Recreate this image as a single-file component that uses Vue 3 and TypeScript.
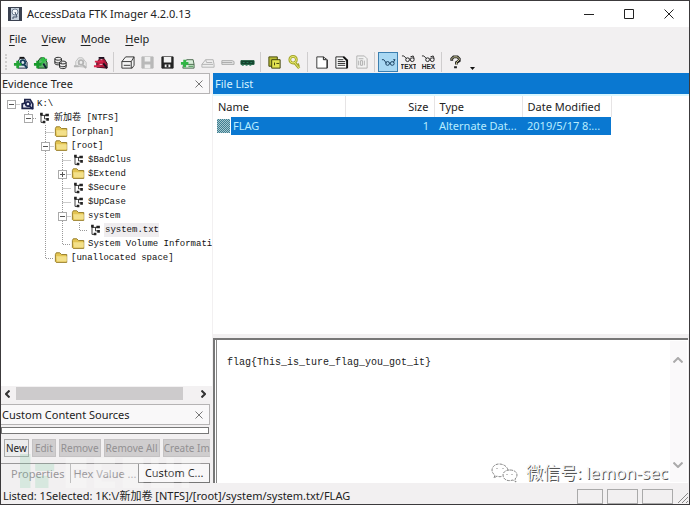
<script setup lang="ts">
import { ref } from 'vue'

interface Shape { d: string; fill?: string; stroke?: string; w?: number }

const casePath = 'M2 13V8l3-1V3h6l3 5v5z'
const icons: Record<string, Shape[]> = {
  addItem: [
    { d: 'M5 14V7l3-4h4l3 5v6z', fill: '#dfe8ee', stroke: '#1c2440', w: 1 },
    { d: 'M8 8a2.5 2.5 0 1 0 5 0a2.5 2.5 0 1 0-5 0M12 10l3 4', stroke: '#17405a', w: 2 },
    { d: 'M7 3h5', stroke: '#111', w: 2 },
    { d: 'M1 10h8M5 6v8', stroke: '#23a336', w: 3 },
  ],
  addAll: [
    { d: 'M5 14V7l3-4h4l3 5v6z', fill: '#5fb76c', stroke: '#14401c', w: 1 },
    { d: 'M8 10l4-4M11 2v6M8 5h7', stroke: '#2fc045', w: 2 },
    { d: 'M1 10h8M5 6v8', stroke: '#179a2b', w: 3 },
    { d: 'M11 9l3 5', stroke: '#123', w: 2 },
  ],
  mount: [
    { d: 'M2 4c0-2 7-2 7 0v5c0 2-7 2-7 0zM2 4c0 2 7 2 7 0M2 7c0 2 7 2 7 0', fill: '#eee', stroke: '#222', w: 1 },
    { d: 'M7 8c0-2 7-2 7 0v5c0 2-7 2-7 0zM7 8c0 2 7 2 7 0M7 11c0 2 7 2 7 0', fill: '#eee', stroke: '#222', w: 1 },
  ],
  removeItem: [
    { d: 'M3 12V7l3-4h4l4 5v5z', fill: '#eee', stroke: '#bbb', w: 1 },
    { d: 'M6 8a2.5 2.5 0 1 0 5 0a2.5 2.5 0 1 0-5 0M10 10l4 4M1 12h5', stroke: '#b5b5b5', w: 2 },
  ],
  removeAll: [
    { d: 'M4 13V8l3-4h5l3 5v5z', fill: '#b5183c', stroke: '#3d0c1c', w: 1 },
    { d: 'M6 3h6M11 9l4 5', stroke: '#1c1020', w: 2 },
    { d: 'M1 12h7M2 7h9', stroke: '#d8244b', w: 2 },
    { d: 'M7 10h3M8 5h2', stroke: '#f0c9d2', w: 1 },
  ],
  image: [
    { d: 'M2 7l4-5h9v9l-2 3H2zM2 7h10l3-5M12 7v7', fill: '#f4f4f4', stroke: '#333', w: 1 },
    { d: 'M4 11h7', stroke: '#333', w: 1 },
  ],
  saveOff: [
    { d: 'M2 2h12v12H2z', fill: '#b9b9b9', stroke: '#b9b9b9', w: 1 },
    { d: 'M5 2h6v5H5zM5 10h6v4H5z', fill: '#efefef' },
  ],
  save: [
    { d: 'M2 2h12v12H2z', fill: '#222', stroke: '#222', w: 1 },
    { d: 'M4 2h8v6H4zM5 10h6v3H5z', fill: '#f2f2f2' },
    { d: 'M7 10h2v3H7z', fill: '#222' },
  ],
  imageAdd: [
    { d: 'M4 9l3-4h7l1 5v4H3zM4 10h11', fill: '#d8ecd9', stroke: '#47674b', w: 1 },
    { d: 'M1 9h8M5 5v8', stroke: '#31b545', w: 3 },
    { d: 'M9 12h5', stroke: '#2f8a3c', w: 1 },
  ],
  driveOff: [{ d: 'M2 10l4-5h8l1 5v3H2zM2 10h12M6 5l1 3h6', fill: '#eee', stroke: '#b2b2b2', w: 1 }],
  capsule: [{ d: 'M2 6h11l2 1v3H2zM2 8h11', fill: '#e5e5e5', stroke: '#aaa', w: 1 }],
  ram: [
    { d: 'M1 6h14v4H1z', fill: '#143f2c', stroke: '#1a5b3b', w: 1 },
    { d: 'M2 11h2M6 11h2M10 11h2M3 8h2M7 8h2M11 8h2', stroke: '#26805a', w: 1 },
  ],
  files: [
    { d: 'M2 2h9v10H2z', fill: '#b9bc35', stroke: '#44470c', w: 1 },
    { d: 'M5 5h9v9H5z', fill: '#e4e552', stroke: '#3a3d0a', w: 1 },
    { d: 'M10 9h3M8 8v3', stroke: '#3a3d0a', w: 1 },
  ],
  key: [
    { d: 'M3 5a3 3 0 1 0 7 0a3 3 0 1 0-7 0M8 8l5 6M11 11l2-1', stroke: '#a3a52a', w: 3 },
    { d: 'M3 5a3 3 0 1 0 7 0a3 3 0 1 0-7 0M8 8l5 6', stroke: '#eef077', w: 1 },
  ],
  page: [
    { d: 'M3 2h7l4 3v9H3z', fill: '#fff', stroke: '#333', w: 1 },
    { d: 'M10 2v3h3M14 5v9', stroke: '#111', w: 1 },
  ],
  pageText: [
    { d: 'M2 2h9l3 3v9H2z', fill: '#fff', stroke: '#222', w: 1 },
    { d: 'M4 5h6M4 7h8M4 9h8M4 11h8', stroke: '#222', w: 1 },
    { d: 'M14 5v9M10 2l4 4', stroke: '#111', w: 2 },
  ],
  pageHex: [
    { d: 'M3 1h8l3 3v10H3z', fill: '#f2f2f2', stroke: '#b0b0b0', w: 1 },
    { d: 'M5 6v5M7 6h2v5H7zM11 6v5M5 4h5', stroke: '#adadad', w: 1 },
  ],
  glasses: [{ d: 'M1 5h2l3 4M5 9a2 2 0 1 0 4 0a2 2 0 1 0-4 0M10 9a2 2 0 1 0 4 0a2 2 0 1 0-4 0M9 9h1M13 8l2-3h-2', stroke: '#153c5c', w: 1 }],
  glassesTag: [{ d: 'M1 1h2l3 3M5 5a2 2 0 1 0 4 0a2 2 0 1 0-4 0M10 5a2 2 0 1 0 4 0a2 2 0 1 0-4 0M9 4h1M10 2l3-1 1 3', stroke: '#222', w: 1 }],
  help: [
    { d: 'M4 6V4l2-2h4l2 2v2L9 8v2M8 12v2', stroke: '#222', w: 3 },
    { d: 'M4 5V4l2-2h4l2 2v1L9 8v2', stroke: '#dcd9a0', w: 1 },
  ],
  disk: [
    { d: casePath, fill: '#e9ebf5', stroke: '#20264a', w: 2 },
    { d: 'M6 8a2.5 2.5 0 1 0 5 0a2.5 2.5 0 1 0-5 0M10 10l4 4', stroke: '#1c2350', w: 2 },
  ],
  volume: [
    { d: 'M4 3v10h4M4 5h6M8 5v4h4', stroke: '#222', w: 1 },
    { d: 'M3 2h3v3H3zM9 3h4v3H9zM10 8h3v3h-3zM6 11h3v3H6z', fill: '#222' },
  ],
  folder: [
    { d: 'M1 4l1-2h4l2 2h6v9H2l-1-1z', fill: '#e3c452', stroke: '#8f7520', w: 1 },
    { d: 'M2 6h12v6H3z', fill: '#f3e08a' },
  ],
}

interface Tool { icon: string; title: string; off?: boolean; active?: boolean; tag?: string }
const toolGroups: Tool[][] = [
  [
    { icon: 'addItem', title: 'Add Evidence Item' },
    { icon: 'addAll', title: 'Add All Attached Devices' },
    { icon: 'mount', title: 'Image Mounting' },
    { icon: 'removeItem', title: 'Remove Evidence Item', off: true },
    { icon: 'removeAll', title: 'Remove All Evidence Items' },
  ],
  [
    { icon: 'image', title: 'Create Disk Image' },
    { icon: 'saveOff', title: 'Export Disk Image', off: true },
    { icon: 'save', title: 'Export Logical Image' },
    { icon: 'imageAdd', title: 'Add to Custom Content Image' },
    { icon: 'driveOff', title: 'Create Custom Content Image', off: true },
    { icon: 'capsule', title: 'Verify Image', off: true },
    { icon: 'ram', title: 'Capture Memory' },
  ],
  [
    { icon: 'files', title: 'Obtain Protected Files' },
    { icon: 'key', title: 'Detect EFS Encryption' },
  ],
  [
    { icon: 'page', title: 'Export Files' },
    { icon: 'pageText', title: 'Export Directory Listing' },
    { icon: 'pageHex', title: 'Export File Hash List', off: true },
  ],
  [
    { icon: 'glasses', title: 'Automatic preview', active: true },
    { icon: 'glassesTag', title: 'Text preview', tag: 'TEXT' },
    { icon: 'glassesTag', title: 'Hex preview', tag: 'HEX' },
  ],
  [{ icon: 'help', title: 'Help Topics' }],
]

// Guide cells: R = root, space = empty, | = line through, + = tee, L = last branch.
// The box drawn over the last cell shows whether the node is open.
interface TreeNode { guides: string; box?: 'open' | 'closed'; icon: string; label: string; current?: boolean }
const nodes: TreeNode[] = [
  { guides: 'R', box: 'open', icon: 'disk', label: 'K:\\' },
  { guides: ' L', box: 'open', icon: 'volume', label: '新加卷 [NTFS]' },
  { guides: '  +', icon: 'folder', label: '[orphan]' },
  { guides: '  +', box: 'open', icon: 'folder', label: '[root]' },
  { guides: '  |+', icon: 'volume', label: '$BadClus' },
  { guides: '  |+', box: 'closed', icon: 'folder', label: '$Extend' },
  { guides: '  |+', icon: 'volume', label: '$Secure' },
  { guides: '  |+', icon: 'volume', label: '$UpCase' },
  { guides: '  |+', box: 'open', icon: 'folder', label: 'system' },
  { guides: '  ||L', icon: 'volume', label: 'system.txt', current: true },
  { guides: '  |L', icon: 'folder', label: 'System Volume Informati' },
  { guides: '  L', icon: 'folder', label: '[unallocated space]' },
]

const guidePath: Record<string, string> = {
  R: 'M8.5 7.5H17', ' ': '', '|': 'M8.5 0V14', '+': 'M8.5 0V14M8.5 7.5H17', L: 'M8.5 0V7.5H17',
}

const menus = ['File', 'View', 'Mode', 'Help']
const actions = ['New', 'Edit', 'Remove', 'Remove All', 'Create Im']
const tabs = ['Properties', 'Hex Value ...', 'Custom C...']
const activeTab = ref('Custom C...')
const preview = ref('flag{This_is_ture_flag_you_got_it}')
</script>

<template>
  <div class="window">
    <header class="titlebar">
      <svg class="appicon" viewBox="0 0 14 14">
        <rect width="14" height="14" fill="#3a4150" />
        <path d="M3 1h8v12H3z" fill="#c9d3de" />
        <circle cx="7" cy="5" r="3" fill="#f4f7fa" stroke="#6c7c90" />
        <path d="M7 5l2 5H5v2" fill="none" stroke="#46546a" />
      </svg>
      <h1>AccessData FTK Imager 4.2.0.13</h1>
      <button class="caption" aria-label="Minimize"><svg viewBox="0 0 10 10"><path d="M0 5.5h10" /></svg></button>
      <button class="caption" aria-label="Maximize"><svg viewBox="0 0 10 10"><path d="M.5.5h9v9h-9z" /></svg></button>
      <button class="caption" aria-label="Close"><svg viewBox="0 0 10 10"><path d="M.5.5l9 9M9.5.5l-9 9" /></svg></button>
    </header>

    <nav class="menubar">
      <button v-for="m in menus" :key="m"><u>{{ m[0] }}</u>{{ m.slice(1) }}</button>
    </nav>

    <div class="toolbar" role="toolbar">
      <span class="grip"></span>
      <div v-for="(group, g) in toolGroups" :key="g" class="group">
        <button v-for="t in group" :key="t.title" class="tool" :class="{ active: t.active }" :disabled="t.off" :aria-label="t.title">
          <svg viewBox="0 0 16 16">
            <path v-for="(s, i) in icons[t.icon]" :key="i" :d="s.d" :fill="s.fill ?? 'none'" :stroke="s.stroke ?? 'none'" :stroke-width="s.w ?? 0" />
            <text v-if="t.tag" x="8" y="15" text-anchor="middle">{{ t.tag }}</text>
          </svg>
        </button>
      </div>
      <button class="more" aria-label="Toolbar options"><svg viewBox="0 0 5 3"><path d="M0 0h5L2.5 3z" /></svg></button>
    </div>

    <main>
      <aside>
        <div class="panehead">
          <h2>Evidence Tree</h2>
          <button aria-label="Close Evidence Tree"><svg viewBox="0 0 8 8"><path d="M.5.5l7 7M7.5.5l-7 7" /></svg></button>
        </div>
        <ul class="tree" role="tree">
          <li v-for="n in nodes" :key="n.label" role="treeitem">
            <svg v-for="(c, i) in n.guides.split('')" :key="i" class="guide" viewBox="0 0 17 14">
              <path class="dots" :d="guidePath[c]" />
              <g v-if="n.box && i === n.guides.length - 1">
                <rect x="4.5" y="3.5" width="8" height="8" />
                <path class="sign" :d="n.box === 'open' ? 'M6 7.5h5' : 'M6 7.5h5M8.5 5v5'" />
              </g>
            </svg>
            <svg class="nodeicon" viewBox="0 0 16 16">
              <path v-for="(s, i) in icons[n.icon]" :key="i" :d="s.d" :fill="s.fill ?? 'none'" :stroke="s.stroke ?? 'none'" :stroke-width="s.w ?? 0" />
            </svg>
            <span :class="{ current: n.current }">{{ n.label }}</span>
          </li>
        </ul>
        <div class="hscroll">
          <button aria-label="Scroll left"><svg viewBox="0 0 5 8"><path d="M4.5 .5L1 4l3.5 3.5" /></svg></button>
          <span class="thumb"></span>
          <button aria-label="Scroll right"><svg viewBox="0 0 5 8"><path d="M.5 .5L4 4L.5 7.5" /></svg></button>
        </div>

        <div class="panehead second">
          <h2>Custom Content Sources</h2>
          <button aria-label="Close Custom Content Sources"><svg viewBox="0 0 8 8"><path d="M.5.5l7 7M7.5.5l-7 7" /></svg></button>
        </div>
        <div class="sources"></div>
        <div class="actions">
          <button v-for="(a, i) in actions" :key="a" :disabled="i > 0">{{ a }}</button>
        </div>
        <div class="tabs" role="tablist">
          <button v-for="t in tabs" :key="t" role="tab" :aria-selected="activeTab === t" :class="{ selected: activeTab === t }" @click="activeTab = t">{{ t }}</button>
        </div>
        <svg class="stamp" viewBox="0 0 200 36" aria-hidden="true">
          <path d="M0 0h11v36H0zM16 10h20v8H16zM16 23h14v13H16z" fill="#6fc79a" opacity=".2" />
          <path d="M48 4h22v12H56v6h14v14H48zM78 4h22v7H86v6h12v6H86v6h14v7H78zM108 4h22v32h-22zM138 4h8v24h8V4h8v32h-24zM170 4h20v8h-12v6h10v6h-10v12h-8z" fill="#fff" opacity=".25" />
        </svg>
      </aside>

      <section class="content">
        <h2 class="bluehead">File List</h2>
        <div class="list">
          <table>
            <colgroup><col class="c-name" /><col class="c-size" /><col class="c-type" /><col class="c-date" /></colgroup>
            <thead>
              <tr><th>Name</th><th class="num">Size</th><th>Type</th><th>Date Modified</th></tr>
            </thead>
            <tbody>
              <tr>
                <td class="name"><div><span class="fileicon"></span><span class="filename">FLAG</span></div></td>
                <td class="num">1</td><td>Alternate Dat...</td><td>2019/5/17 8:...</td>
              </tr>
            </tbody>
          </table>
        </div>
        <div class="viewer">
          <textarea v-model="preview" readonly aria-label="File content" spellcheck="false"></textarea>
          <div class="vscroll">
            <button aria-label="Scroll up"><svg viewBox="0 0 10 6"><path d="M.5 5.5L5 1l4.5 4.5" /></svg></button>
            <button aria-label="Scroll down"><svg viewBox="0 0 10 6"><path d="M.5 .5L5 5L9.5 .5" /></svg></button>
          </div>
          <div class="account">
            <svg viewBox="0 0 28 20">
              <path d="M17 7C16 3 12 1 8 1C4 1 1 4 1 7c0 2 1 4 3 5l-1 3 3-2c2 1 4 1 5 0" />
              <path d="M19 7c4 0 7 2 7 5 0 2-1 3-2 4l1 3-3-2c-6 2-10-1-10-5 0-3 3-5 7-5z" />
              <path d="M6 5v1M12 5v1M16 11v1M21 11v1" />
            </svg>
            <span>微信号: lemon-sec</span>
          </div>
        </div>
      </section>
    </main>

    <footer>
      <p>Listed: 1Selected: 1K:\/新加卷 [NTFS]/[root]/system/system.txt/FLAG</p>
      <span class="cell small"></span><span class="cell"></span><span class="cell"></span>
      <svg class="resize" viewBox="0 0 12 14"><path d="M1 13L11 3M5 13l6-6M9 13l2-2" /></svg>
    </footer>
  </div>
</template>

<style>
body { margin: 0; }
</style>

<style scoped>
* { box-sizing: border-box; }
.window {
  display: flex; flex-direction: column; min-height: 100vh;
  border: 1px solid #3c3a3c; background: #f2f0f1; color: #222;
  font: 11px/16px "Noto Sans", "Noto Sans CJK SC", sans-serif;
}
button { border: 0; padding: 0; background: none; font: inherit; color: inherit; }
h1, h2, p, ul { margin: 0; padding: 0; font: inherit; }
svg { display: block; fill: none; }

.titlebar { display: flex; align-items: center; height: 26px; padding-left: 7px; background: #fff; }
.titlebar h1 { flex: 1; padding-left: 5px; white-space: nowrap; }
.appicon { width: 14px; height: 14px; }
.caption { display: grid; place-items: center; width: 40px; height: 26px; }
.caption svg { width: 10px; height: 10px; stroke: #222; }

.menubar { display: flex; gap: 15px; height: 24px; padding-left: 8px; align-items: center; }
.menubar u { text-underline-offset: 2px; }

.toolbar { display: flex; align-items: center; height: 22px; padding-left: 4px; }
.grip { width: 5px; height: 16px; border-left: 2px dotted #d0cece; }
.group { display: flex; }
.group + .group { margin-left: 3px; padding-left: 3px; border-left: 1px solid #cfcdce; }
.tool { display: grid; place-items: center; width: 20px; height: 20px; }
.tool svg { width: 15px; height: 15px; }
.tool text { font: bold 7px "Liberation Sans", sans-serif; fill: #222; }
.tool.active { background: #a9d8f3; border: 1px solid #3c7fb0; }
.more { align-self: flex-end; padding: 0 0 3px 5px; }
.more svg { width: 5px; height: 3px; fill: #111; }

main { flex: 1; display: grid; grid-template-columns: 212px minmax(0, 1fr); }
aside { position: relative; display: flex; flex-direction: column; min-width: 0; padding-right: 3px; }
.panehead {
  display: flex; align-items: center; justify-content: space-between; height: 21px;
  padding: 0 6px 0 1px; border: 1px solid #b5b3b4; border-left: 0; background: #f9f8f9;
}
.panehead svg { width: 8px; height: 8px; stroke: #777; }
.tree {
  flex: 1; margin-right: -2px; padding: 3px 0 0 2px; overflow: hidden; list-style: none; background: #fff;
  font: 9px/14px "Liberation Mono", "Noto Sans CJK SC", monospace; color: #111;
}
.tree li { display: flex; height: 14px; white-space: pre; }
.guide { flex: none; width: 17px; height: 14px; }
.dots { stroke: #999; stroke-dasharray: 1 1; }
.guide rect { fill: #fff; stroke: #aaa; }
.sign { stroke: #555; }
.nodeicon { flex: none; width: 15px; height: 14px; margin-right: 1px; }
.tree span { padding-left: 1px; }
.tree .current { background: #efedef; }
.hscroll { display: flex; align-items: center; height: 15px; padding: 0 4px; background: #f3f1f2; }
.hscroll svg { width: 5px; height: 8px; stroke: #333; stroke-width: 2; }
.hscroll .thumb { width: 167px; height: 13px; margin: 0 auto 0 6px; background: #cdcbcc; }
.second { margin-top: 3px; }
.sources { height: 7px; margin: 2px 1px 0 0; border: 1px solid #777; background: #fff; }
.actions { display: flex; gap: 3px; margin-top: 5px; padding-left: 3px; }
.actions button { height: 18px; padding: 0 1px; border: 1px solid #c4c2c3; background: #cfcdce; font-size: 10px; line-height: 16px; white-space: nowrap; }
.actions button:disabled { color: #929092; }
.actions button:first-child { border-color: #aaa; background: #ececec; }
.actions button:nth-child(2) { padding: 0 2px; }
.actions button:last-child { flex: 1; padding: 0; border-right: 0; }
.tabs { display: flex; margin-top: 6px; margin-bottom: 4px; border-top: 1px solid #9a9899; color: #99979a; }
.tabs button { height: 19px; padding: 0 4px; white-space: nowrap; }
.tabs button:first-child { padding: 0 6px 0 10px; }
.tabs button:nth-child(2) { padding: 0 2px; border-left: 1px solid #aaa; }
.tabs .selected { flex: 1; color: #222; background: #f8f7f8; border: 1px solid #777; border-top: 0; }
.stamp { position: absolute; left: 19px; bottom: -2px; width: 190px; height: 36px; pointer-events: none; }

.content { display: flex; flex-direction: column; min-width: 0; background: #f2f0f1; }
.bluehead { height: 21px; padding-left: 2px; background: #0a78d1; color: #d6f3ff; line-height: 21px; }
.list { flex: 1; margin-bottom: 4px; border-top: 2px solid #d9f7ff; background: #fff; }
table { width: 398px; border-collapse: collapse; table-layout: fixed; }
.c-name { width: 132px; } .c-size { width: 89px; } .c-type { width: 88px; } .c-date { width: 89px; }
th, td { padding: 0 5px; overflow: hidden; text-align: left; font-weight: normal; white-space: nowrap; }
th { height: 21px; border-right: 1px solid #e6e4e5; }
td { height: 18px; background: #0a78d1; color: #b8ecff; }
th.num, td.num { text-align: right; }
td.name { padding: 0; }
td.name div { display: flex; height: 18px; background: #fff; }
.filename { flex: 1; padding-left: 2px; line-height: 18px; background: #0a78d1; }
.fileicon { width: 13px; height: 14px; margin: 2px 1px 0 4px; background: repeating-conic-gradient(#3f7d92 0 25%, #a5c8cd 0 50%) 0 0 / 2px 2px; }
.viewer {
  position: relative; display: flex; height: 145px; margin: 0 1px 4px 0; padding: 1px;
  border: 2px solid #777; border-width: 2px 0 0 2px; background: #fff; box-shadow: inset 1px 0 #fff, inset 2px 0 #888;
}
textarea {
  flex: 1; min-width: 0; padding: 15px 11px; border: 0; resize: none; outline: 0; background: transparent;
  font: 10px/14px "Liberation Mono", monospace; color: #222; overflow: hidden;
}
.vscroll { display: flex; flex-direction: column; justify-content: space-between; width: 17px; padding: 16px 0 14px 3px; background: #faf9fa; }
.vscroll svg { width: 10px; height: 6px; stroke: #aaa; stroke-width: 2; }
.account { position: absolute; right: 20px; bottom: -2px; display: flex; align-items: center; gap: 7px; color: #f4f4f4; font-size: 17px; line-height: 24px; text-shadow: 1px 1px 0 #555; white-space: nowrap; }
.account svg { width: 28px; height: 20px; stroke: #888; stroke-dasharray: 3 1; }

footer { display: flex; align-items: flex-end; height: 17px; gap: 4px; padding-left: 2px; }
footer p { flex: 1; align-self: center; white-space: nowrap; }
.cell { width: 31px; height: 15px; border: 1px solid #aaa; }
.cell.small { width: 26px; }
.resize { width: 12px; height: 14px; stroke: #888; }
</style>
